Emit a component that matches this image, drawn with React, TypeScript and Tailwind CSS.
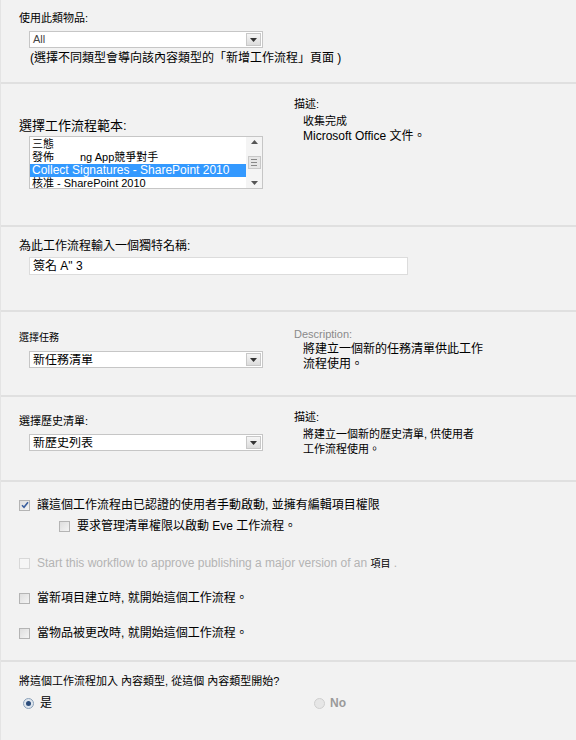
import React from "react"

const font = { fontFamily: '"Liberation Sans", "Noto Sans CJK TC", sans-serif' }

function Select({ value, textClass = "text-[11px] text-[#444]" }: { value: string; textClass?: string }) {
  return (
    <div className="flex h-[17px] w-[234px] items-center border border-[#c6c6c6] bg-white">
      <span className={"flex-1 truncate pl-[3px] leading-none " + textClass}>{value}</span>
      <div className="mr-[1px] flex h-[13px] w-[15px] items-center justify-center border border-[#c8c8c8] bg-gradient-to-b from-[#f6f6f6] to-[#dcdcdc]">
        <svg width="7" height="4" viewBox="0 0 7 4"><path d="M0 0h7L3.5 4z" fill="#333" /></svg>
      </div>
    </div>
  )
}

function Check({ checked = false, disabled = false }: { checked?: boolean; disabled?: boolean }) {
  return (
    <span
      className={
        "flex h-[11px] w-[11px] shrink-0 items-center justify-center border " +
        (disabled ? "border-[#d8d8d8] bg-[#f6f6f6]" : "border-[#b4b4b4] bg-gradient-to-br from-[#dedede] to-[#f4f4f4]")
      }
    >
      {checked && (
        <svg width="8" height="8" viewBox="0 0 8 8">
          <path d="M1 4.2l2 2L7 1.2" stroke="#3a5f9e" strokeWidth="1.6" fill="none" />
        </svg>
      )}
    </span>
  )
}

function Section({ h, children, className = "" }: { h: string; children: React.ReactNode; className?: string }) {
  return <section className={"border-b-2 border-[#e0e0e0] " + h + " " + className}>{children}</section>
}

export default function App() {
  return (
    <div style={font} className="h-[740px] w-[576px] overflow-hidden border-l border-[#e4e4e4] bg-[#f2f2f2] text-black">
      {/* content type */}
      <Section h="h-[84px]" className="pl-[18px] pt-[12px]">
        <div className="text-[11px] leading-[13px]">使用此類物品:</div>
        <div className="mt-[6px] ml-[10px]">
          <Select value="All" />
        </div>
        <div className="ml-[11px] mt-[3px] text-[12px] leading-[14px]">(選擇不同類型會導向該內容類型的「新增工作流程」頁面 )</div>
      </Section>

      {/* template */}
      <Section h="h-[143px]" className="flex pt-[13px]">
        <div className="w-[275px] pl-[18px] pt-[21px]">
          <div className="text-[13px] leading-[15px]">選擇工作流程範本:</div>
          <div className="ml-[10px] mt-[3px] flex h-[53px] w-[234px] border border-[#c6c6c6] bg-white">
            <div className="flex-1 pt-[1px] text-[11px] leading-[13px]">
              <div className="pl-[2px]">三態</div>
              <div className="pl-[2px]">
                發佈<span className="ml-[26px]">ng App</span>競爭對手
              </div>
              <div className="bg-[#3399ff] pl-[2px] text-[12px] text-white">Collect Signatures - SharePoint 2010</div>
              <div className="pl-[2px]">核准 - SharePoint 2010</div>
            </div>
            <div className="flex w-[16px] flex-col items-center justify-between bg-[#f4f4f4] py-[3px]">
              <svg width="7" height="4" viewBox="0 0 7 4"><path d="M0 4h7L3.5 0z" fill="#555" /></svg>
              <div className="flex h-[13px] w-[13px] flex-col items-center justify-center gap-[2px] border border-[#c8c8c8] bg-[#e6e6e6]">
                <span className="h-px w-[6px] bg-[#888]" />
                <span className="h-px w-[6px] bg-[#888]" />
                <span className="h-px w-[6px] bg-[#888]" />
              </div>
              <svg width="7" height="4" viewBox="0 0 7 4"><path d="M0 0h7L3.5 4z" fill="#555" /></svg>
            </div>
          </div>
        </div>
        <div className="pl-[18px] text-[11px] leading-[15px]">
          <div>描述:</div>
          <div className="ml-[9px] mt-[2px]">收集完成</div>
          <div className="ml-[9px] text-[12px]">Microsoft Office 文件。</div>
        </div>
      </Section>

      {/* name */}
      <Section h="h-[85px]" className="pl-[18px] pt-[12px]">
        <div className="text-[12px] leading-[14px]">為此工作流程輸入一個獨特名稱:</div>
        <div className="ml-[10px] mt-[4px] flex h-[18px] w-[379px] items-center border border-[#dcdcdc] bg-white pl-[3px] text-[12px]">
          簽名 A" 3
        </div>
      </Section>

      {/* task list */}
      <Section h="h-[85px]" className="flex pt-[15px]">
        <div className="w-[275px] pl-[18px] pt-[5px]">
          <div className="text-[10px] leading-[12px]">選擇任務</div>
          <div className="ml-[10px] mt-[7px]">
            <Select value="新任務清單" textClass="text-[12px] text-black" />
          </div>
        </div>
        <div className="pl-[18px] text-[12px] leading-[15px]">
          <div className="text-[11px] text-[#8a8a8a]">Description:</div>
          <div className="ml-[9px]">將建立一個新的任務清單供此工作</div>
          <div className="ml-[9px]">流程使用。</div>
        </div>
      </Section>

      {/* history list */}
      <Section h="h-[85px]" className="flex pt-[13px]">
        <div className="w-[275px] pl-[18px] pt-[5px]">
          <div className="text-[11px] leading-[13px]">選擇歷史清單:</div>
          <div className="ml-[10px] mt-[6px]">
            <Select value="新歷史列表" textClass="text-[12px] text-black" />
          </div>
        </div>
        <div className="pl-[18px] text-[11px] leading-[15px]">
          <div>描述:</div>
          <div className="ml-[9px] mt-[2px]">將建立一個新的歷史清單, 供使用者</div>
          <div className="ml-[9px]">工作流程使用。</div>
        </div>
      </Section>

      {/* start options */}
      <Section h="h-[180px]" className="pl-[18px] pt-[16px] text-[12px] leading-[14px]">
        <div className="flex items-center gap-[7px]">
          <Check checked />
          <span>讓這個工作流程由已認證的使用者手動啟動, 並擁有編輯項目權限</span>
        </div>
        <div className="ml-[40px] mt-[7px] flex items-center gap-[7px]">
          <Check />
          <span>要求管理清單權限以啟動 Eve 工作流程。</span>
        </div>
        <div className="mt-[23px] flex items-center gap-[7px] text-[#b4b4b4]">
          <Check disabled />
          <span>
            Start this workflow to approve publishing a major version of an <span className="text-[10px] text-black">項目</span> .
          </span>
        </div>
        <div className="mt-[20px] flex items-center gap-[7px]">
          <Check />
          <span>當新項目建立時, 就開始這個工作流程。</span>
        </div>
        <div className="mt-[21px] flex items-center gap-[7px]">
          <Check />
          <span>當物品被更改時, 就開始這個工作流程。</span>
        </div>
      </Section>

      {/* content type add */}
      <section className="pl-[18px] pt-[13px]">
        <div className="text-[11px] leading-[13px]">將這個工作流程加入 內容類型, 從這個 內容類型開始?</div>
        <div className="mt-[6px] flex items-center text-[12px]">
          <div className="flex w-[295px] items-center gap-[6px] pl-[4px]">
            <span className="flex h-[11px] w-[11px] items-center justify-center rounded-full border border-[#8aa0b8] bg-[#dfe6ee]">
              <span className="h-[5px] w-[5px] rounded-full bg-[#2b4c7a]" />
            </span>
            <span>是</span>
          </div>
          <div className="flex items-center gap-[5px] text-[#9a9a9a]">
            <span className="h-[11px] w-[11px] rounded-full border border-[#cfcfcf] bg-[#e6e6e6]" />
            <span className="font-bold">No</span>
          </div>
        </div>
      </section>
    </div>
  )
}
